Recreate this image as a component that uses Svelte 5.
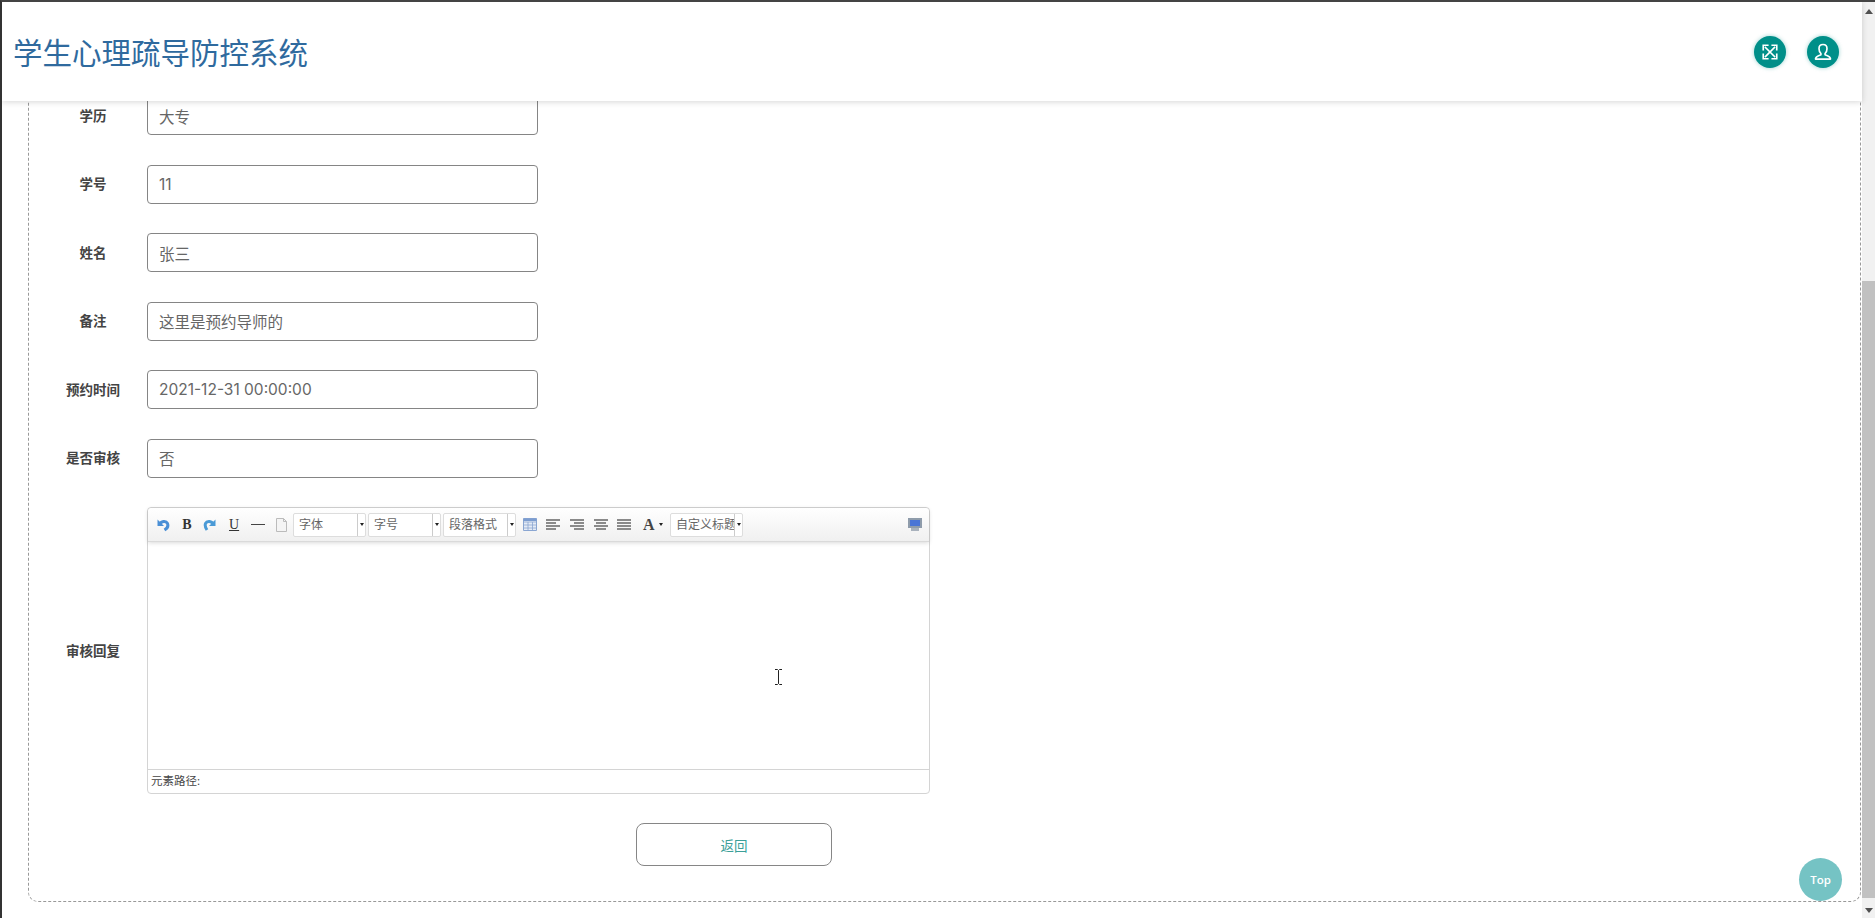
<script lang="ts">
  const fields = [
    { label: '学历', value: '大专' },
    { label: '学号', value: '11' },
    { label: '姓名', value: '张三' },
    { label: '备注', value: '这里是预约导师的' },
    { label: '预约时间', value: '2021-12-31 00:00:00' },
    { label: '是否审核', value: '否' }
  ];
</script>

<div class="page">
  <div class="main">
    <header class="topbar">
      <h1 class="title">学生心理疏导防控系统</h1>
      <div class="actions">
        <button class="round" type="button" aria-label="全屏">
          <svg width="18" height="18" viewBox="0 0 24 24" fill="none" stroke="#fff" stroke-width="2.200" stroke-linecap="square" aria-hidden="true">
            <path d="M6 6l12 12M18 6L6 18"/>
            <path d="M3 9V3h6M15 3h6v6M21 15v6h-6M9 21H3v-6"/>
          </svg>
        </button>
        <button class="round" type="button" aria-label="用户">
          <svg width="20" height="20" viewBox="0 0 24 24" fill="none" stroke="#fff" stroke-width="2" stroke-linejoin="round" aria-hidden="true">
            <path d="M12 3c-3 0-4.800 2-4.800 5 0 2.500 1 4.500 2.300 5.800v1.400c-2 1-6.500 1.800-6.500 5.300h18c0-3.500-4.500-4.300-6.500-5.300v-1.400c1.300-1.300 2.300-3.300 2.300-5.800 0-3-1.800-5-4.800-5z"/>
          </svg>
        </button>
      </div>
    </header>

    <section class="panel">
      {#each fields as f}
        <div class="row">
          <span class="label">{f.label}</span>
          <input class="field" type="text" value={f.value} readonly />
        </div>
      {/each}

      <div class="row">
        <span class="label">审核回复</span>
        <div class="editor">
          <div class="toolbar">
            <span class="tool">
              <svg width="14" height="14" viewBox="0 0 14 14" fill="none" stroke="#4a8fd6" stroke-width="3" aria-hidden="true">
                <path d="M3.500 6.500C5 3 10 2.500 11.500 5.500c1 2.500-.5 5-3 6.500"/>
                <path d="M1.500 1.500v6.500H8" fill="#4a8fd6" stroke="none"/>
              </svg>
            </span>
            <span class="tool serif">B</span>
            <span class="tool">
              <svg width="14" height="14" viewBox="0 0 14 14" fill="none" stroke="#4a9ad6" stroke-width="3" aria-hidden="true">
                <path d="M10.500 6.500C9 3 4 2.500 2.500 5.500c-1 2.500.5 5 1.500 6.500"/>
                <path d="M12.500 1.500v6.500H6" fill="#4a9ad6" stroke="none"/>
              </svg>
            </span>
            <span class="tool serif under">U</span>
            <span class="tool"><span class="hr"></span></span>
            <span class="tool">
              <svg width="13" height="14" viewBox="0 0 13 14" fill="#f4f4f4" stroke="#bbb" aria-hidden="true">
                <path d="M1.500.5h7l3 3v10h-10z"/>
                <path d="M8.500.5v3h3" fill="none"/>
              </svg>
            </span>

            <span class="combo"><span class="combo-text">字体</span><span class="caret"></span></span>
            <span class="combo"><span class="combo-text">字号</span><span class="caret"></span></span>
            <span class="combo"><span class="combo-text">段落格式</span><span class="caret"></span></span>

            <span class="tool">
              <svg width="14" height="13" viewBox="0 0 14 13" fill="#e4ebf6" stroke="#8aa6d2" aria-hidden="true">
                <path d="M.5.500h13v12H.5z"/>
                <path d="M.5 4h13M.5 7h13M.5 10h13M5 4v8.500M9.500 4v8.500" stroke-width=".8"/>
                <path d="M.5.500h13V3H.5z" fill="#7c9dd0" stroke="none"/>
              </svg>
            </span>
            <span class="tool"><span class="lines l"><i></i><i></i><i></i><i></i></span></span>
            <span class="tool"><span class="lines r"><i></i><i></i><i></i><i></i></span></span>
            <span class="tool"><span class="lines c"><i></i><i></i><i></i><i></i></span></span>
            <span class="tool"><span class="lines j"><i></i><i></i><i></i><i></i></span></span>

            <span class="color">
              <span class="serif big">A</span>
              <span class="caret small"></span>
            </span>
            <span class="combo"><span class="combo-text">自定义标题</span><span class="caret"></span></span>

            <span class="tool tool-end">
              <svg width="14" height="13" viewBox="0 0 14 13" aria-hidden="true">
                <path d="M0 0h14v10H0z" fill="#8f9cab"/>
                <path d="M2 2h10v6H2z" fill="#4a75d6"/>
                <path d="M3 10h8v3H3z" fill="#a9b2bd"/>
              </svg>
            </span>
          </div>
          <div class="edit-area"></div>
          <div class="status">元素路径:</div>
        </div>
      </div>

      <button class="back" type="button">返回</button>
    </section>
  </div>

  <div class="scrollbar">
    <span class="arrow up"></span>
    <span class="thumb"></span>
    <span class="arrow-wrap"><span class="arrow down"></span></span>
  </div>

  <button class="to-top" type="button">Top</button>

  <!-- text cursor caught in the capture -->
  <svg class="ibeam" width="9" height="16" viewBox="0 0 9 16" fill="none" stroke="#222" stroke-width="1" aria-hidden="true">
    <path d="M1 .5h2.500l1 1 1-1H8M4.500 1.500v13M1 15.500h2.500l1-1 1 1H8"/>
  </svg>
</div>

<style>
  :global(body) {
    margin: 0;
    background: #fff;
  }

  .page {
    position: relative;
    display: flex;
    width: 1875px;
    height: 918px;
    box-sizing: border-box;
    overflow: hidden;
    background: #fff;
    border-top: 2px solid #444;
    border-left: 2px solid #333;
    font-family: "Noto Sans", "Noto Sans CJK SC", sans-serif;
  }

  .main {
    flex: 1;
    min-width: 0;
    display: flex;
    flex-direction: column;
  }

  .topbar {
    position: relative;
    z-index: 2;
    flex-shrink: 0;
    display: flex;
    align-items: center;
    justify-content: space-between;
    height: 99px;
    padding: 0 23px 0 11px;
    box-sizing: border-box;
    background: #fff;
    box-shadow: 0 1px 6px rgba(0, 0, 0, 0.16);
  }

  .title {
    margin: 3px 0 0;
    font-size: 29.500px;
    font-weight: 400;
    color: #2f6a9e;
    line-height: 1.2;
  }

  .actions {
    display: flex;
    gap: 21px;
  }

  .round {
    display: flex;
    align-items: center;
    justify-content: center;
    width: 32px;
    height: 32px;
    padding: 0;
    border: none;
    border-radius: 50%;
    background: #008f89;
    box-shadow: 0 0 4px rgba(0, 143, 137, 0.4);
  }

  .panel {
    flex-shrink: 0;
    margin: -20px 1px 0 26px;
    padding: 14px 0 35px;
    border: 1px dashed #999;
    border-radius: 10px;
    background: #fff;
  }

  .row {
    display: flex;
    align-items: center;
    padding-left: 10px;
    margin-bottom: 29.500px;
  }

  .label {
    width: 108px;
    flex-shrink: 0;
    padding-bottom: 2px;
    text-align: center;
    font-size: 13.500px;
    font-weight: 700;
    color: #444;
  }

  .field {
    width: 391px;
    height: 39px;
    box-sizing: border-box;
    padding: 0 11px;
    border: 1px solid #858585;
    border-radius: 4px;
    outline: none;
    background: #fff;
    font-family: Inter, "Noto Sans CJK SC", sans-serif;
    font-size: 15.500px;
    color: #666;
  }

  .editor {
    display: flex;
    flex-direction: column;
    width: 783px;
    height: 287px;
    box-sizing: border-box;
    border: 1px solid #d4d4d4;
    border-radius: 4px;
    background: #fff;
  }

  .toolbar {
    flex-shrink: 0;
    display: flex;
    align-items: center;
    height: 33px;
    padding-left: 3.500px;
    background: linear-gradient(#fff, #f0f0f0);
    border-bottom: 1px solid #dadada;
    box-shadow: 0 1px 4px rgba(0, 0, 0, 0.15);
    border-radius: 4px 4px 0 0;
  }

  .tool {
    flex-shrink: 0;
    display: flex;
    align-items: center;
    justify-content: center;
    width: 23.600px;
    height: 24px;
  }

  .tool-end {
    margin-left: auto;
    margin-right: 2px;
  }

  .serif {
    font-family: "Liberation Serif", serif;
    font-size: 14px;
    font-weight: 700;
    color: #333;
  }

  .under {
    font-weight: 400;
    text-decoration: underline;
  }

  .big {
    font-size: 16px;
    color: #444;
  }

  .hr {
    width: 14px;
    height: 1px;
    background: #444;
  }

  .combo {
    flex-shrink: 0;
    display: flex;
    align-items: stretch;
    width: 73px;
    height: 24px;
    margin-right: 2px;
    box-sizing: border-box;
    border: 1px solid #ddd;
    border-radius: 2px;
    background: #fff;
  }

  .combo-text {
    flex: 1;
    min-width: 0;
    overflow: hidden;
    padding-left: 5px;
    border-right: 1px solid #ccc;
    font-size: 12px;
    line-height: 22px;
    white-space: nowrap;
    color: #666;
  }

  .caret {
    align-self: center;
    width: 0;
    height: 0;
    margin: 0 2px;
    border-left: 2.500px solid transparent;
    border-right: 2.500px solid transparent;
    border-top: 3px solid #222;
  }

  .combo .caret {
    margin: 0 1.500px;
  }

  .color {
    flex-shrink: 0;
    display: flex;
    align-items: center;
    justify-content: flex-start;
    gap: 4px;
    width: 32px;
    margin-right: 2px;
    padding-left: 7px;
    box-sizing: border-box;
  }

  .small {
    margin: 0;
  }

  .lines {
    display: flex;
    flex-direction: column;
    gap: 1px;
    width: 14px;
  }

  .lines i {
    display: block;
    width: 100%;
    height: 2px;
    background: #8a8a8a;
  }

  .lines.l i:nth-child(even) {
    width: 70%;
  }

  .lines.r {
    align-items: flex-end;
  }

  .lines.r i:nth-child(even) {
    width: 70%;
  }

  .lines.c {
    align-items: center;
  }

  .lines.c i:nth-child(even) {
    width: 70%;
  }

  .edit-area {
    flex: 1;
  }

  .status {
    flex-shrink: 0;
    height: 24px;
    box-sizing: border-box;
    padding: 0 3px;
    border-top: 1px solid #d4d4d4;
    font-size: 11.500px;
    line-height: 22px;
    color: #444;
  }

  .row:last-of-type {
    margin-bottom: 29px;
  }

  .back {
    display: block;
    width: 196px;
    height: 43px;
    margin-left: 607px;
    border: 1px solid #868686;
    border-radius: 8px;
    background: #fff;
    font-family: inherit;
    font-size: 13.500px;
    color: #3c9f99;
  }

  .scrollbar {
    flex-shrink: 0;
    display: flex;
    flex-direction: column;
    width: 13px;
    background: #f1f1f1;
  }

  .arrow {
    display: block;
    width: 0;
    height: 0;
    border-left: 4px solid transparent;
    border-right: 4px solid transparent;
  }

  .arrow.up {
    flex-shrink: 0;
    margin: 7px 0 0 2.500px;
    border-bottom: 5px solid #505050;
  }

  .thumb {
    flex: 1;
    margin-top: 267px;
    background: #c1c1c1;
  }

  .arrow-wrap {
    flex-shrink: 0;
    display: flex;
    align-items: flex-end;
    height: 20px;
    padding: 0 0 5px 2.500px;
    box-sizing: border-box;
  }

  .arrow.down {
    border-top: 5px solid #505050;
  }

  .to-top {
    position: absolute;
    left: 1797px;
    top: 856px;
    width: 43px;
    height: 43px;
    padding: 0;
    border: none;
    border-radius: 50%;
    background: #75c3c4;
    font-family: "Open Sans", sans-serif;
    font-size: 11.500px;
    font-weight: 600;
    color: #fff;
  }

  .ibeam {
    position: absolute;
    left: 772px;
    top: 667px;
  }
</style>
